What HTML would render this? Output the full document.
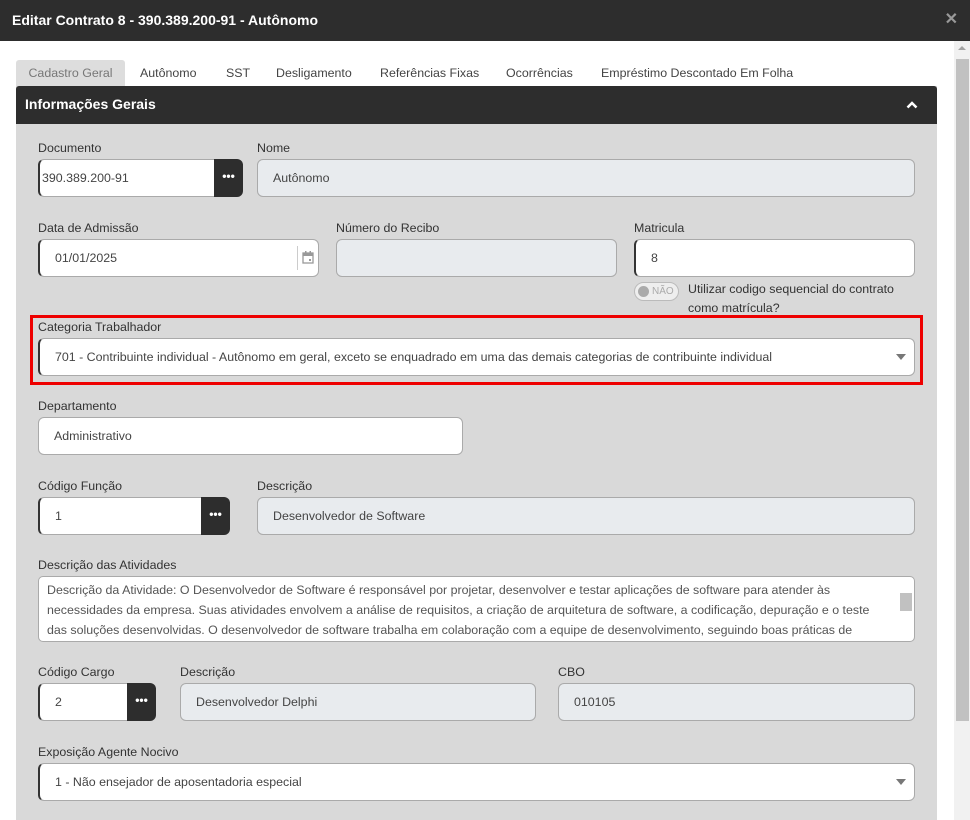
<!DOCTYPE html>
<html><head><meta charset="utf-8"><style>
*{box-sizing:border-box;margin:0;padding:0}
body{width:970px;height:820px;overflow:hidden;background:#fff;font-family:"Liberation Sans",sans-serif;font-size:12.4px;color:#333;position:relative}
.top{position:absolute;left:0;top:0;width:970px;height:41px;background:#2d2d2d;color:#fff;font-weight:bold;font-size:14px;line-height:40px;padding-left:12px}
.x{position:absolute;right:12px;top:0;color:#999;font-size:16px}
.sb{position:absolute;left:954px;top:41px;width:16px;height:779px;background:#f1f1f1}
.th{position:absolute;left:956px;top:59px;width:13px;height:662px;background:#c1c1c1}
.tabs{position:absolute;top:60px;left:16px;height:26px;width:900px}
.tab{position:absolute;top:0;height:26px;line-height:26px;color:#444;white-space:nowrap}
.panel{position:absolute;left:16px;top:86px;width:921px;height:734px;background:#d9d9d9}
.ph{height:38px;background:#2d2d2d;color:#fff;font-weight:bold;font-size:14px;line-height:36px;padding-left:9px;border-radius:3px 3px 0 0}
.l{position:absolute;color:#333;white-space:nowrap}
.in{position:absolute;height:38px;background:#fff;border:1px solid #aaa;border-left:2px solid #333;border-radius:6px;line-height:36px;padding-left:15px;color:#444;white-space:nowrap}
.ro{background:#e8ebee;border:1px solid #aaa;border-radius:6px}
.btn{position:absolute;height:38px;width:29px;background:#2d2d2d;border-radius:0 6px 6px 0;color:#fff;text-align:center;line-height:34px;font-weight:bold;font-size:12px}
.arr{position:absolute;right:8px;top:15px;width:0;height:0;border-left:5px solid transparent;border-right:5px solid transparent;border-top:6px solid #777}
.w{position:absolute;left:0;top:0;width:970px;height:820px}
</style></head><body>
<div class="top">Editar Contrato 8 - 390.389.200-91 - Autônomo<span class="x">✕</span></div>
<div class="sb"></div><div class="th"></div>
<div style="position:absolute;left:958px;top:46px;border-left:4px solid transparent;border-right:4px solid transparent;border-bottom:4px solid #a3a3a3"></div>
<div class="tabs">
<div class="tab" style="left:0;width:109px;background:#ddd;border-radius:3px 3px 0 0;text-align:center;color:#777">Cadastro Geral</div>
<div class="tab" style="left:124px">Autônomo</div>
<div class="tab" style="left:210px">SST</div>
<div class="tab" style="left:260px">Desligamento</div>
<div class="tab" style="left:364px">Referências Fixas</div>
<div class="tab" style="left:490px">Ocorrências</div>
<div class="tab" style="left:585px">Empréstimo Descontado Em Folha</div>
</div>
<div class="panel"><div class="ph">Informações Gerais<svg style="position:absolute;left:890px;top:14px" width="12" height="9" viewBox="0 0 12 9"><path d="M1.5 7.5L6 3l4.5 4.5" stroke="#fff" stroke-width="2.5" fill="none"/></svg></div></div>
<div class="w">
<div class="l" style="left:38px;top:141px">Documento</div>
<div class="in" style="left:38px;top:159px;width:190px;padding-left:2px">390.389.200-91</div>
<div class="btn" style="left:214px;top:159px">•••</div>
<div class="l" style="left:257px;top:141px">Nome</div>
<div class="in ro" style="left:257px;top:159px;width:658px">Autônomo</div>

<div class="l" style="left:38px;top:221px">Data de Admissão</div>
<div class="in" style="left:38px;top:239px;width:281px">01/01/2025<span style="position:absolute;left:257px;top:6px;height:24px;border-left:1px solid #ccc"></span><svg style="position:absolute;left:262px;top:11px" width="12" height="13" viewBox="0 0 12 13"><rect x="1" y="2" width="10" height="10" fill="none" stroke="#999" stroke-width="1.3"/><rect x="1" y="2" width="10" height="3" fill="#999"/><rect x="3" y="0" width="1.5" height="3" fill="#999"/><rect x="7.5" y="0" width="1.5" height="3" fill="#999"/><rect x="7" y="8" width="2" height="2" fill="#999"/></svg></div>
<div class="l" style="left:336px;top:221px">Número do Recibo</div>
<div class="in ro" style="left:336px;top:239px;width:281px"></div>
<div class="l" style="left:634px;top:221px">Matricula</div>
<div class="in" style="left:634px;top:239px;width:281px">8</div>
<div style="position:absolute;left:634px;top:282px;width:45px;height:19px;border:1px solid #bbb;border-radius:10px;background:#eee;font-size:10px;line-height:17px;color:#aaa;padding-left:17px">NÃO<span style="position:absolute;left:3px;top:3px;width:11px;height:11px;border-radius:50%;background:#aaa"></span></div>
<div class="l" style="left:688px;top:280px;line-height:19px">Utilizar codigo sequencial do contrato<br>como matrícula?</div>

<div style="position:absolute;left:30px;top:315px;width:893px;height:70px;border:3px solid #e00"></div>
<div class="l" style="left:38px;top:320px">Categoria Trabalhador</div>
<div class="in" style="left:38px;top:338px;width:877px">701 - Contribuinte individual - Autônomo em geral, exceto se enquadrado em uma das demais categorias de contribuinte individual<span class="arr"></span></div>

<div class="l" style="left:38px;top:399px">Departamento</div>
<div class="in" style="left:38px;top:417px;width:425px;border-left:1px solid #aaa">Administrativo</div>

<div class="l" style="left:38px;top:479px">Código Função</div>
<div class="in" style="left:38px;top:497px;width:177px">1</div>
<div class="btn" style="left:201px;top:497px">•••</div>
<div class="l" style="left:257px;top:479px">Descrição</div>
<div class="in ro" style="left:257px;top:497px;width:658px">Desenvolvedor de Software</div>

<div class="l" style="left:38px;top:558px">Descrição das Atividades</div>
<div style="position:absolute;left:38px;top:576px;width:877px;height:66px;background:#fff;border:1px solid #aaa;border-radius:5px;padding:3px 30px 0 8px;line-height:20px;overflow:hidden;color:#555">Descrição da Atividade: O Desenvolvedor de Software é responsável por projetar, desenvolver e testar aplicações de software para atender às necessidades da empresa. Suas atividades envolvem a análise de requisitos, a criação de arquitetura de software, a codificação, depuração e o teste das soluções desenvolvidas. O desenvolvedor de software trabalha em colaboração com a equipe de desenvolvimento, seguindo boas práticas de<div style="position:absolute;right:2px;top:16px;width:12px;height:18px;background:#c1c1c1"></div></div>

<div class="l" style="left:38px;top:665px">Código Cargo</div>
<div class="in" style="left:38px;top:683px;width:103px">2</div>
<div class="btn" style="left:127px;top:683px">•••</div>
<div class="l" style="left:180px;top:665px">Descrição</div>
<div class="in ro" style="left:180px;top:683px;width:356px">Desenvolvedor Delphi</div>
<div class="l" style="left:558px;top:665px">CBO</div>
<div class="in ro" style="left:558px;top:683px;width:357px">010105</div>

<div class="l" style="left:38px;top:745px">Exposição Agente Nocivo</div>
<div class="in" style="left:38px;top:763px;width:877px">1 - Não ensejador de aposentadoria especial<span class="arr"></span></div>
</div>
</body></html>
